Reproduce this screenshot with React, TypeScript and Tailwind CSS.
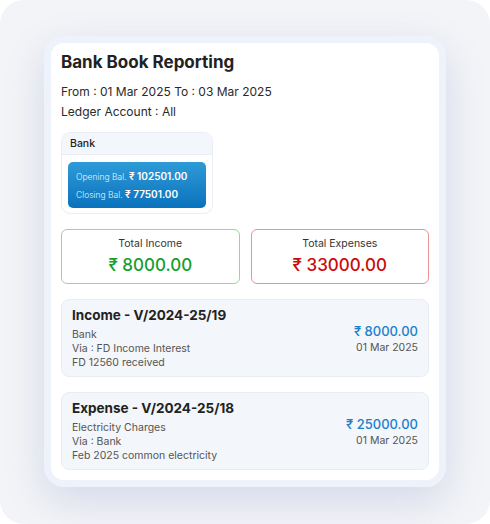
const txns = [
  {
    title: 'Income - V/2024-25/19',
    lines: ['Bank', 'Via : FD Income Interest', 'FD 12560 received'],
    amount: '₹ 8000.00',
    date: '01 Mar 2025',
  },
  {
    title: 'Expense - V/2024-25/18',
    lines: ['Electricity Charges', 'Via : Bank', 'Feb 2025 common electricity'],
    amount: '₹ 25000.00',
    date: '01 Mar 2025',
  },
]

export default function App() {
  return (
    <div className="h-[524px] w-[490px] overflow-hidden rounded-[24px] bg-[#f3f4f7] pl-[44px] pt-[36px] font-['Inter',sans-serif]">
      <div className="w-[402px] rounded-[20px] border-[7px] border-[#eef2fb] bg-white shadow-[0_14px_40px_rgba(90,110,180,0.2)]">
        <div className="rounded-[14px] bg-white px-[10px] pb-[10px] pt-[7px]">
          <h1 className="text-[17px] font-bold leading-[24px] text-[#222]">Bank Book Reporting</h1>
          <div className="mt-[8px] text-[12px] leading-[20px] text-[#2a2a2a]">
            <p>From : 01 Mar 2025 To : 03 Mar 2025</p>
            <p>Ledger Account : All</p>
          </div>

          <div className="mt-[10px] w-[152px] overflow-hidden rounded-[9px] border border-[#e9eef5] bg-white">
            <div className="flex h-[22px] items-center border-b border-[#e9eef5] bg-[#f3f6fa] px-[8px] text-[10.5px] font-medium text-[#222]">
              Bank
            </div>
            <div className="px-[6px] pb-[5px] pt-[7px]">
              <div className="flex h-[46px] flex-col justify-center gap-[3px] rounded-[5px] bg-gradient-to-b from-[#2e9bd8] to-[#0872bc] px-[8px] text-white">
                <p className="text-[8.5px] leading-[14px]">
                  <span className="font-light opacity-90">Opening Bal.</span>{' '}
                  <span className="text-[10px] font-semibold">₹ 102501.00</span>
                </p>
                <p className="text-[8.5px] leading-[14px]">
                  <span className="font-light opacity-90">Closing Bal.</span>{' '}
                  <span className="text-[10px] font-semibold">₹ 77501.00</span>
                </p>
              </div>
            </div>
          </div>

          <div className="mt-[15px] grid grid-cols-2 gap-[11px]">
            <div className="flex h-[55px] flex-col items-center justify-center rounded-[6px] border border-[#93d89a]">
              <p className="text-[10.5px] leading-[14px] text-[#333]">Total Income</p>
              <p className="mt-[3px] text-[17px] font-medium leading-[22px] text-[#14a02a]">₹ 8000.00</p>
            </div>
            <div className="flex h-[55px] flex-col items-center justify-center rounded-[6px] border border-[#e89494]">
              <p className="text-[10.5px] leading-[14px] text-[#333]">Total Expenses</p>
              <p className="mt-[3px] text-[17px] font-medium leading-[22px] text-[#cc0a0a]">₹ 33000.00</p>
            </div>
          </div>

          <div className="mt-[15px] flex flex-col gap-[15px]">
            {txns.map((t) => (
              <div
                key={t.title}
                className="flex h-[78px] items-center justify-between rounded-[8px] border border-[#e8edf3] bg-[#f3f6fa] px-[10px]"
              >
                <div>
                  <p className="text-[13.5px] font-bold leading-[19px] text-[#222]">{t.title}</p>
                  <div className="mt-[3px] text-[10.5px] leading-[14px] text-[#555]">
                    {t.lines.map((l) => (
                      <p key={l}>{l}</p>
                    ))}
                  </div>
                </div>
                <div className="text-right">
                  <p className="text-[13px] font-medium leading-[20px] text-[#1b80c9]">{t.amount}</p>
                  <p className="text-[10.5px] leading-[14px] text-[#555]">{t.date}</p>
                </div>
              </div>
            ))}
          </div>
        </div>
      </div>
    </div>
  )
}
